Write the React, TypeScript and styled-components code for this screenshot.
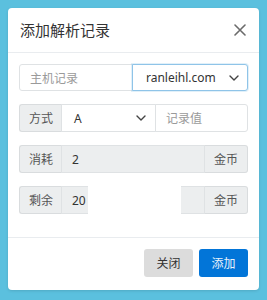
import React from 'react';
import styled, { createGlobalStyle } from 'styled-components';

const GlobalStyle = createGlobalStyle`
  html, body {
    margin: 0;
    padding: 0;
    background: #5bc0de;
  }
  * {
    box-sizing: border-box;
  }
  body {
    font-family: "Noto Sans", "Noto Sans CJK SC", sans-serif;
    font-size: 12px;
    color: #333;
  }
`;

const Page = styled.div`
  width: 267px;
  height: 300px;
  padding: 8px;
`;

const Modal = styled.div`
  width: 251px;
  height: 282px;
  background: #fff;
  border-radius: 4px;
  display: flex;
  flex-direction: column;
  box-shadow: 0 1px 3px rgba(0, 0, 0, 0.12);
`;

const Header = styled.div`
  height: 45px;
  display: flex;
  align-items: center;
  justify-content: space-between;
  padding: 0 13px 0 12px;
  border-bottom: 1px solid #e9ecef;
`;

const Title = styled.h5`
  margin: 0;
  font-size: 15px;
  font-weight: 400;
  color: #333;
  line-height: 1;
`;

const CloseButton = styled.button`
  border: none;
  background: none;
  padding: 0;
  width: 12px;
  height: 12px;
  display: flex;
  cursor: pointer;
`;

const Body = styled.div`
  flex: 1;
  padding: 11px 11px 0;
  display: flex;
  flex-direction: column;
  gap: 13px;
`;

const Group = styled.div<{ $h?: number }>`
  position: relative;
  display: flex;
  height: ${p => p.$h ?? 28}px;
`;

const Addon = styled.span<{ $side: 'left' | 'right' }>`
  flex: 0 0 43px;
  display: flex;
  align-items: center;
  justify-content: center;
  background: #eceeef;
  color: #555;
  border: 1px solid #d9dcde;
  ${p =>
    p.$side === 'left'
      ? 'border-radius: 3px 0 0 3px; border-right: none;'
      : 'border-radius: 0 3px 3px 0; border-left: none;'}
`;

const Field = styled.div<{ $first?: boolean; $last?: boolean; $readonly?: boolean; $focus?: boolean; $pl?: number }>`
  flex: 1 1 0;
  min-width: 0;
  display: flex;
  align-items: center;
  justify-content: space-between;
  padding: 0 ${p => (p.$focus ? 8 : 9)}px 0 ${p => p.$pl ?? (p.$focus ? 13 : 10)}px;
  border: 1px solid ${p => (p.$focus ? '#8fc4e8' : '#dfe2e4')};
  background: ${p => (p.$readonly ? '#eceeef' : '#fff')};
  border-radius: ${p => (p.$first ? '3px' : '0')} ${p => (p.$last ? '3px 3px' : '0 0')} ${p => (p.$first ? '3px' : '0')};
  margin-left: ${p => (p.$first ? 0 : -1)}px;
  box-shadow: ${p => (p.$focus ? '0 0 0 1px rgba(91, 170, 222, 0.18)' : 'none')};
  z-index: ${p => (p.$focus ? 1 : 0)};
`;

const Value = styled.span`
  color: #333;
`;

const Placeholder = styled.span`
  color: #9a9a9a;
`;

const Mask = styled.div`
  position: absolute;
  left: 69px;
  top: -1px;
  width: 93px;
  height: 29px;
  background: #fff;
  z-index: 2;
`;

const Footer = styled.div`
  height: 53px;
  border-top: 1px solid #e9ecef;
  display: flex;
  justify-content: flex-end;
  align-items: flex-start;
  gap: 6px;
  padding: 11px 11px 0;
`;

const Button = styled.button<{ $primary?: boolean }>`
  width: 49px;
  height: 28px;
  border: none;
  border-radius: 3px;
  font-family: inherit;
  font-size: 12px;
  padding: 0;
  background: ${p => (p.$primary ? '#0275d8' : '#dcdcdc')};
  color: ${p => (p.$primary ? '#e8f2fb' : '#333')};
`;

const Chevron = () => (
  <svg width="10" height="6" viewBox="0 0 10 6" fill="none">
    <path d="M1 1 L5 5 L9 1" stroke="#444" strokeWidth="1.4" strokeLinecap="round" strokeLinejoin="round" />
  </svg>
);

export default function App() {
  return (
    <>
      <GlobalStyle />
      <Page>
        <Modal>
          <Header>
            <Title>添加解析记录</Title>
            <CloseButton aria-label="关闭">
              <svg width="12" height="12" viewBox="0 0 12 12">
                <path d="M1 1 L11 11 M11 1 L1 11" stroke="#6b6b6b" strokeWidth="1.6" strokeLinecap="round" />
              </svg>
            </CloseButton>
          </Header>
          <Body>
            <Group $h={27}>
              <Field $first>
                <Placeholder>主机记录</Placeholder>
              </Field>
              <Field $last $focus>
                <Value>ranleihl.com</Value>
                <Chevron />
              </Field>
            </Group>
            <Group>
              <Addon $side="left">方式</Addon>
              <Field $pl={12}>
                <Value>A</Value>
                <Chevron />
              </Field>
              <Field $last>
                <Placeholder>记录值</Placeholder>
              </Field>
            </Group>
            <Group>
              <Addon $side="left">消耗</Addon>
              <Field $readonly>
                <Value>2</Value>
              </Field>
              <Addon $side="right">金币</Addon>
            </Group>
            <Group>
              <Addon $side="left">剩余</Addon>
              <Field $readonly>
                <Value>20</Value>
              </Field>
              <Addon $side="right">金币</Addon>
              <Mask />
            </Group>
          </Body>
          <Footer>
            <Button>关闭</Button>
            <Button $primary>添加</Button>
          </Footer>
        </Modal>
      </Page>
    </>
  );
}
